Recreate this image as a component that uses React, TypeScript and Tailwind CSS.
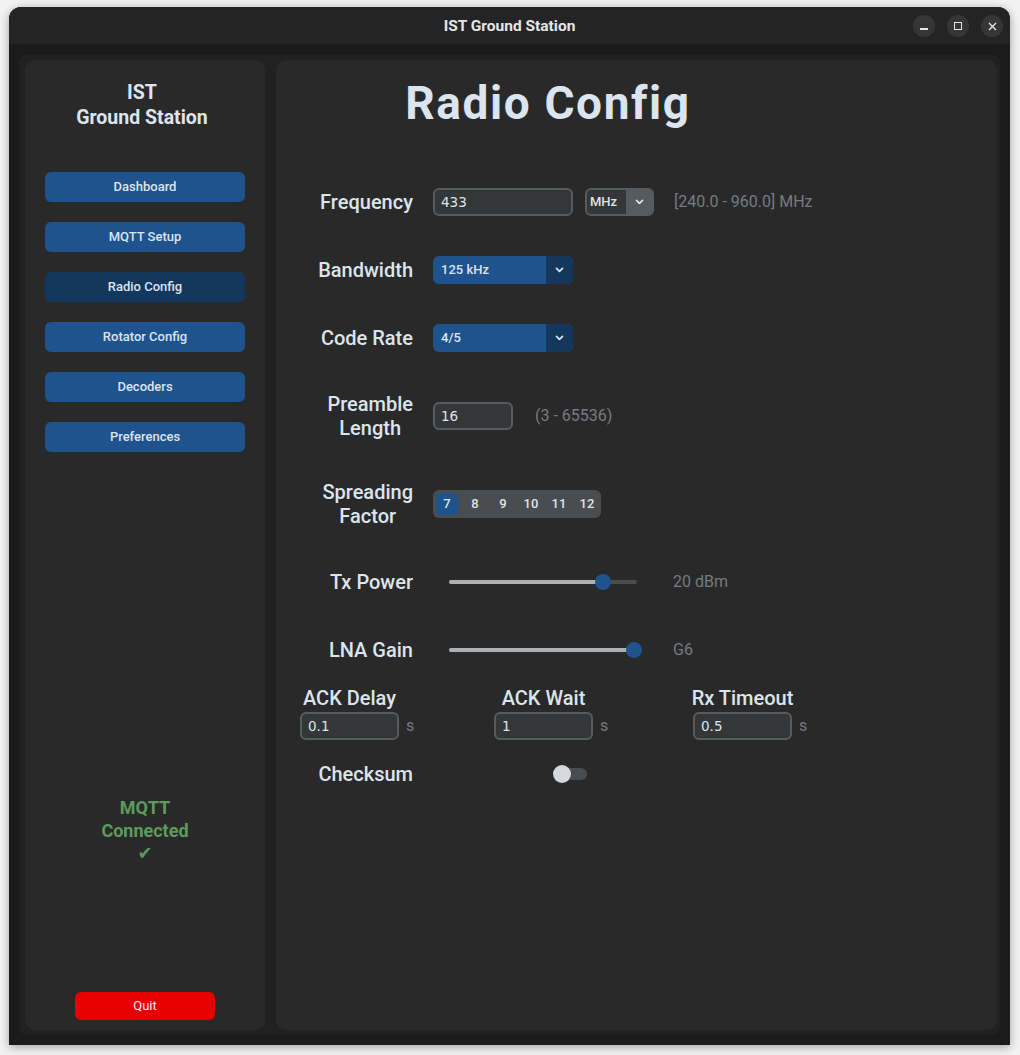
import React from 'react';

const navItems = ['Dashboard', 'MQTT Setup', 'Radio Config', 'Rotator Config', 'Decoders', 'Preferences'];
const spreading = ['7', '8', '9', '10', '11', '12'];

const Chevron = () => (
    <svg width="9" height="6" viewBox="0 0 9 6" fill="none">
        <path d="M1.5 1.3 L4.5 4.3 L7.5 1.3" stroke="#dce4ee" strokeWidth="1.7" strokeLinecap="round" strokeLinejoin="round" />
    </svg>
);

const Label = ({ lines }: { lines: string[] }) => (
    <div className="w-[137px] shrink-0 flex justify-end">
        <div className="text-center text-[20px] leading-[24px] font-medium text-[#dce4ee] whitespace-nowrap">
            {lines.map(l => <div key={l}>{l}</div>)}
        </div>
    </div>
);

const Row = ({ label, h, children }: { label: string[]; h: string; children?: React.ReactNode }) => (
    <div className={`flex items-center ${h}`}>
        <Label lines={label} />
        <div className="ml-[20px] flex items-center">{children}</div>
    </div>
);

const Entry = ({ value, w }: { value: string; w: string }) => (
    <div className={`${w} h-[28px] shrink-0 rounded-[6px] border-2 border-[#565b5e] bg-[#343638] pl-[6px] flex items-center text-[13.5px] text-[#dce4ee] [font-family:'DejaVu_Sans',sans-serif]`}>
        {value}
    </div>
);

const Hint = ({ children, cls }: { children: React.ReactNode; cls: string }) => (
    <span className={`text-[16px] text-[#767b81] whitespace-nowrap ${cls}`}>{children}</span>
);

const OptionMenu = ({ value }: { value: string }) => (
    <div className="w-[140px] h-[28px] rounded-[6px] bg-[#1f538d] flex overflow-hidden">
        <div className="flex-1 pl-[8px] flex items-center text-[13px] font-medium text-[#dce4ee]">{value}</div>
        <div className="w-[27px] bg-[#14375e] flex items-center justify-center">
            <Chevron />
        </div>
    </div>
);

// slider: pos = thumb centre, measured from the track's left end
const Slider = ({ pos }: { pos: number }) => (
    <div className="relative w-[188px] h-[16px] flex items-center">
        <div className="w-full h-[4px] rounded-full bg-[#4a4d50]" />
        <div className="absolute left-0 top-[6px] h-[4px] rounded-full bg-[#aab0b5]" style={{ width: pos }} />
        <div className="absolute top-0 w-[16px] h-[16px] rounded-full bg-[#1f538d]" style={{ left: pos - 8 }} />
    </div>
);

const TimeField = ({ label, value, w }: { label: string; value: string; w: string }) => (
    <div className={`${w} shrink-0 flex flex-col`}>
        <div className="w-[99px] flex justify-center text-[20px] leading-[24px] font-medium text-[#dce4ee] whitespace-nowrap">
            {label}
        </div>
        <div className="mt-[2px] flex items-center">
            <Entry value={value} w="w-[99px]" />
            <span className="ml-[7px] text-[16px] text-[#767b81]">s</span>
        </div>
    </div>
);

const App = () => {
    return (
        <div className="w-[1020px] h-[1055px] bg-[#f2f2f2] overflow-hidden [font-family:Roboto,'DejaVu_Sans',sans-serif]">
            <div className="ml-[9px] mt-[7px] w-[1001px] h-[1038px] rounded-t-[12px] bg-[#1b1b1b] shadow-[0_2px_10px_rgba(0,0,0,0.35)] flex flex-col overflow-hidden">
                {/* Title bar */}
                <div className="relative h-[37px] shrink-0 bg-[#242424] flex items-center justify-center pt-[3px]">
                    <span className="text-[15.5px] font-bold text-[#e6e6e6]">IST Ground Station</span>
                    <div className="absolute right-[7px] top-[8px] flex gap-[12px]">
                        <div className="w-[22px] h-[22px] rounded-full bg-[#363636] flex items-center justify-center">
                            <div className="w-[8px] h-[1.5px] bg-[#e6e6e6] mt-[6px]" />
                        </div>
                        <div className="w-[22px] h-[22px] rounded-full bg-[#363636] flex items-center justify-center">
                            <div className="w-[8px] h-[8px] border-[1.5px] border-[#e6e6e6]" />
                        </div>
                        <div className="w-[22px] h-[22px] rounded-full bg-[#363636] flex items-center justify-center">
                            <svg width="9" height="9" viewBox="0 0 9 9">
                                <path d="M1 1 L8 8 M8 1 L1 8" stroke="#e6e6e6" strokeWidth="1.4" />
                            </svg>
                        </div>
                    </div>
                </div>

                {/* Body */}
                <div className="flex-1 pl-[10px] pr-[10px] pt-[11px] pb-[10px]">
                    <div className="w-full h-full rounded-[8px] bg-[#212121] pl-[6px] pr-[3px] pt-[5px] pb-[5px] flex gap-[11px]">
                        {/* Sidebar */}
                        <div className="w-[240px] shrink-0 rounded-[10px] bg-[#292929] flex flex-col items-center pt-[20px]">
                            <div className="mr-[6px] text-center text-[19.5px] leading-[25px] font-bold text-[#dce4ee]">
                                <div>IST</div>
                                <div>Ground Station</div>
                            </div>
                            <div className="mt-[42px] flex flex-col gap-[20px]">
                                {navItems.map(item => (
                                    <div
                                        key={item}
                                        className={`w-[200px] h-[30px] rounded-[6px] flex items-center justify-center text-[13px] font-medium text-[#dce4ee] ${item === 'Radio Config' ? 'bg-[#14375e]' : 'bg-[#1f538d]'}`}
                                    >
                                        {item}
                                    </div>
                                ))}
                            </div>
                            <div className="mt-[345px] text-center text-[18px] leading-[22.5px] font-bold text-[#5c9b5c]">
                                <div>MQTT</div>
                                <div>Connected</div>
                                <div>✔</div>
                            </div>
                            <div className="flex-1" />
                            <div className="mb-[10px] w-[140px] h-[28px] rounded-[6px] bg-[#e80000] flex items-center justify-center text-[13px] text-[#f2f2f2]">
                                Quit
                            </div>
                        </div>

                        {/* Main panel */}
                        <div className="flex-1 rounded-[10px] bg-[#292929] pt-[15px]">
                            <div className="w-[544px] text-center text-[46px] leading-[56px] font-bold tracking-[1.6px] text-[#dce4ee]">
                                Radio Config
                            </div>

                            <div className="mt-[37px] flex flex-col">
                                <Row label={['Frequency']} h="h-[68px]">
                                    <Entry value="433" w="w-[140px]" />
                                    <div className="ml-[12px] w-[69px] h-[28px] rounded-[6px] border-2 border-[#565b5e] bg-[#343638] flex overflow-hidden">
                                        <div className="flex-1 pl-[3px] flex items-center text-[13px] font-medium text-[#dce4ee]">MHz</div>
                                        <div className="w-[26px] bg-[#565b5e] flex items-center justify-center">
                                            <Chevron />
                                        </div>
                                    </div>
                                    <Hint cls="ml-[20px]">[240.0 - 960.0] MHz</Hint>
                                </Row>

                                <Row label={['Bandwidth']} h="h-[68px]">
                                    <OptionMenu value="125 kHz" />
                                </Row>

                                <Row label={['Code Rate']} h="h-[68px]">
                                    <OptionMenu value="4/5" />
                                </Row>

                                <Row label={['Preamble', 'Length']} h="h-[88px]">
                                    <Entry value="16" w="w-[80px]" />
                                    <Hint cls="ml-[22px]">(3 - 65536)</Hint>
                                </Row>

                                <Row label={['Spreading', 'Factor']} h="h-[88px]">
                                    <div className="w-[168px] h-[28px] rounded-[6px] bg-[#4a4d50] flex">
                                        {spreading.map(v => (
                                            <div key={v} className="w-[28px] h-full p-[3px]">
                                                <div className={`w-full h-full rounded-[4px] flex items-center justify-center text-[13px] font-medium text-[#dce4ee] ${v === '7' ? 'bg-[#1f538d]' : ''}`}>
                                                    {v}
                                                </div>
                                            </div>
                                        ))}
                                    </div>
                                </Row>

                                <Row label={['Tx Power']} h="h-[68px]">
                                    <div className="ml-[16px]">
                                        <Slider pos={154} />
                                    </div>
                                    <Hint cls="ml-[36px]">20 dBm</Hint>
                                </Row>

                                <Row label={['LNA Gain']} h="h-[68px]">
                                    <div className="ml-[16px]">
                                        <Slider pos={185} />
                                    </div>
                                    <Hint cls="ml-[36px]">G6</Hint>
                                </Row>

                                <div className="mt-[2px] pl-[24px] flex">
                                    <TimeField label="ACK Delay" value="0.1" w="w-[194px]" />
                                    <TimeField label="ACK Wait" value="1" w="w-[199px]" />
                                    <TimeField label="Rx Timeout" value="0.5" w="w-[120px]" />
                                </div>

                                <div className="mt-[20px]">
                                    <Row label={['Checksum']} h="h-[28px]">
                                        <div className="ml-[120px] relative w-[34px] h-[18px] flex items-center">
                                            <div className="ml-[2px] w-[32px] h-[12px] rounded-full bg-[#4a4d50]" />
                                            <div className="absolute left-0 top-0 w-[18px] h-[18px] rounded-full bg-[#d5d9de]" />
                                        </div>
                                    </Row>
                                </div>
                            </div>
                        </div>
                    </div>
                </div>
            </div>
        </div>
    );
};

export default App;
